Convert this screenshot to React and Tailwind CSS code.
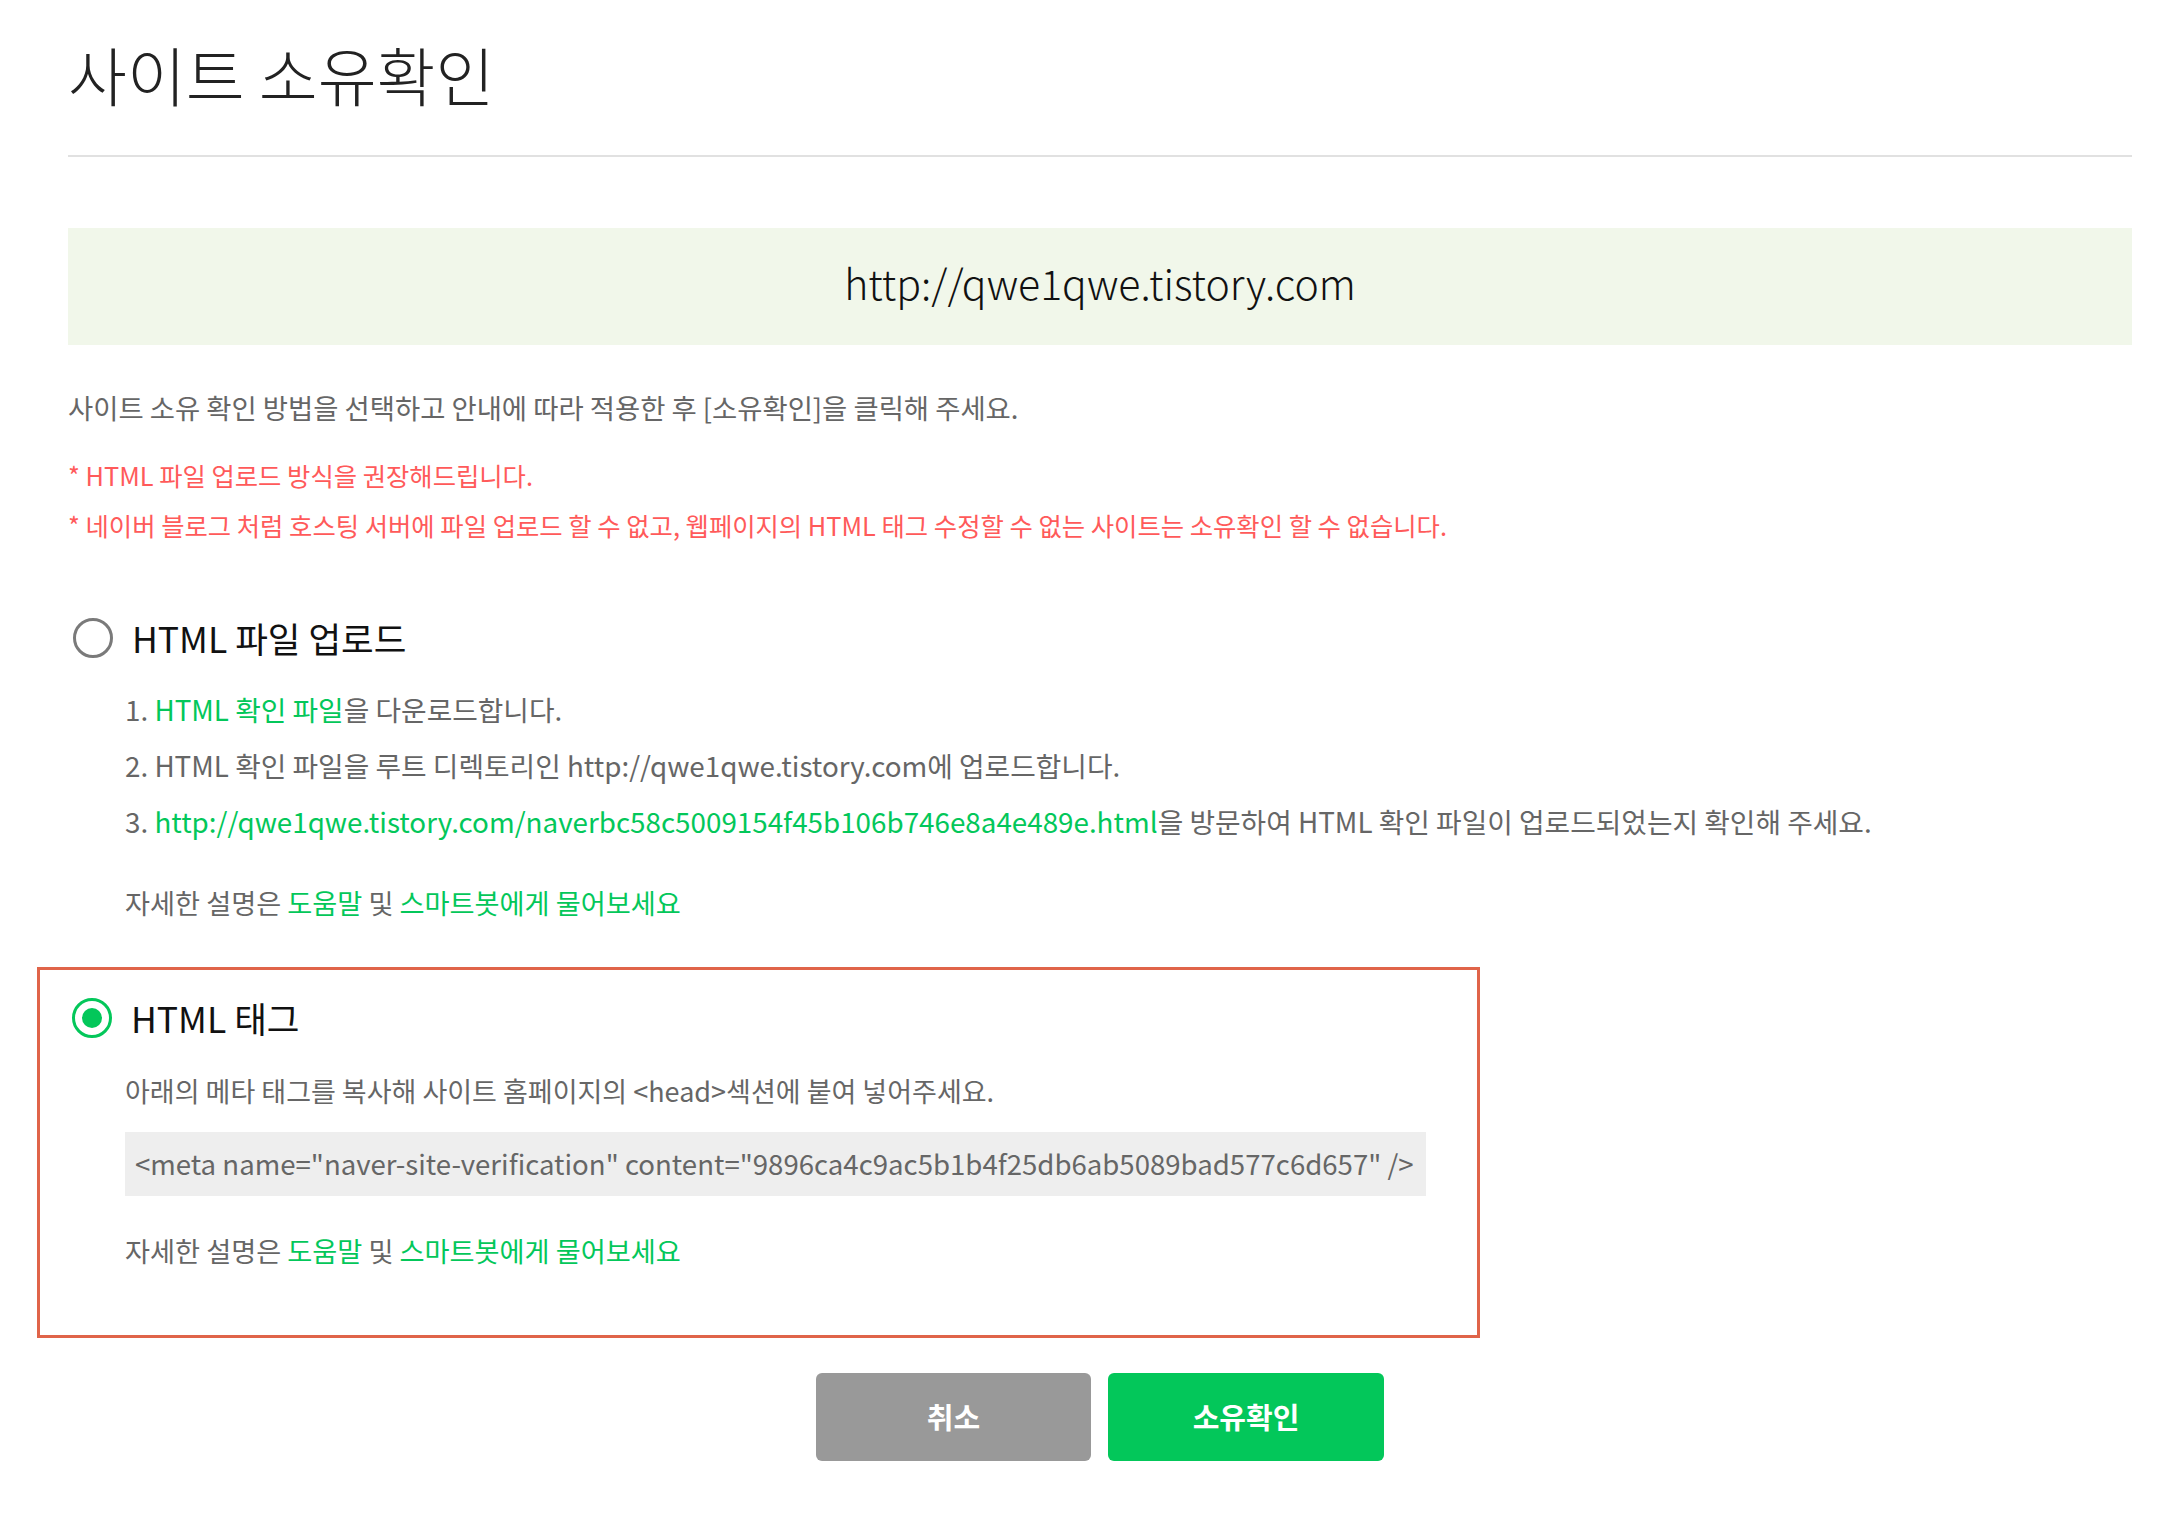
import React from 'react';

const font = { fontFamily: '"Noto Sans CJK KR", "Noto Sans", sans-serif' };

const Radio = ({ checked }) => (
  <span
    className={
      'flex h-[40px] w-[40px] shrink-0 items-center justify-center rounded-full border-[3px] ' +
      (checked ? 'border-[#03c75a]' : 'border-[#7a7a7a]')
    }
  >
    {checked && <span className="h-[20px] w-[20px] rounded-full bg-[#03c75a]" />}
  </span>
);

const Help = ({ className = '' }) => (
  <p className={'text-[27.2px] leading-[56px] text-[#666] ' + className}>
    자세한 설명은 <a className="text-[#03c75a]">도움말</a> 및{' '}
    <a className="text-[#03c75a]">스마트봇에게 물어보세요</a>
  </p>
);

const App = () => {
  return (
    <div className="min-h-[1540px] bg-white pl-[68px] pr-[39px]" style={font}>
      <header className="border-b-2 border-[#e1e1e1] pt-[37px] pb-[46px]">
        <h1 className="text-[64px] font-light leading-[72px] text-[#222]">사이트 소유확인</h1>
      </header>

      <div className="mt-[71px] flex h-[117px] items-center justify-center bg-[#f1f7ea] pb-2">
        <span className="text-[41px] font-light text-[#111]">http://qwe1qwe.tistory.com</span>
      </div>

      <p className="mt-[44px] text-[27.4px] leading-[36px] text-[#666]">
        사이트 소유 확인 방법을 선택하고 안내에 따라 적용한 후 [소유확인]을 클릭해 주세요.
      </p>
      <ul className="mt-[25px] text-[25.35px] leading-[50px] text-[#ff5a5a]">
        <li>* HTML 파일 업로드 방식을 권장해드립니다.</li>
        <li>
          * 네이버 블로그 처럼 호스팅 서버에 파일 업로드 할 수 없고, 웹페이지의 HTML 태그 수정할 수 없는 사이트는
          소유확인 할 수 없습니다.
        </li>
      </ul>

      <section className="mt-[68px]">
        <label className="ml-[5px] flex h-[40px] items-center gap-[19px]">
          <Radio />
          <span className="text-[35.5px] leading-[40px] text-[#111]">HTML 파일 업로드</span>
        </label>
        <ol className="mt-[23px] pl-[57px] text-[27.8px] leading-[56px] text-[#666]">
          <li>
            1. <a className="text-[#03c75a]">HTML 확인 파일</a>을 다운로드합니다.
          </li>
          <li>2. HTML 확인 파일을 루트 디렉토리인 http://qwe1qwe.tistory.com에 업로드합니다.</li>
          <li>
            3.{' '}
            <a className="text-[#03c75a]">
              http://qwe1qwe.tistory.com/naverbc58c5009154f45b106b746e8a4e489e.html
            </a>
            을 방문하여 HTML 확인 파일이 업로드되었는지 확인해 주세요.
          </li>
        </ol>
        <Help className="mt-[25px] pl-[57px]" />
      </section>

      <section className="mt-[37px] -ml-[31px] w-[1443px] border-[3px] border-[#e06449] pl-[28px] pt-[28px] pb-[57px]">
        <label className="ml-[4px] flex h-[40px] items-center gap-[19px]">
          <Radio checked />
          <span className="text-[35.5px] leading-[40px] text-[#111]">HTML 태그</span>
        </label>
        <div className="pl-[57px]">
          <p className="mt-[25px] text-[27px] leading-[56px] text-[#666]">
            아래의 메타 태그를 복사해 사이트 홈페이지의 &lt;head&gt;섹션에 붙여 넣어주세요.
          </p>
          <div className="mt-[13px] flex h-[64px] w-[1301px] items-center bg-[#eeeeee] px-[10px] text-[27.6px] text-[#666]">
            &lt;meta name="naver-site-verification" content="9896ca4c9ac5b1b4f25db6ab5089bad577c6d657" /&gt;
          </div>
          <Help className="mt-[26px]" />
        </div>
      </section>

      <div className="mt-[35px] flex justify-center gap-[17px]">
        <button className="h-[88px] w-[275px] rounded-[6px] bg-[#999999] text-[29px] font-bold text-white">
          취소
        </button>
        <button className="h-[88px] w-[276px] rounded-[6px] bg-[#03c75a] text-[29px] font-bold text-white">
          소유확인
        </button>
      </div>
    </div>
  );
};

export default App;
